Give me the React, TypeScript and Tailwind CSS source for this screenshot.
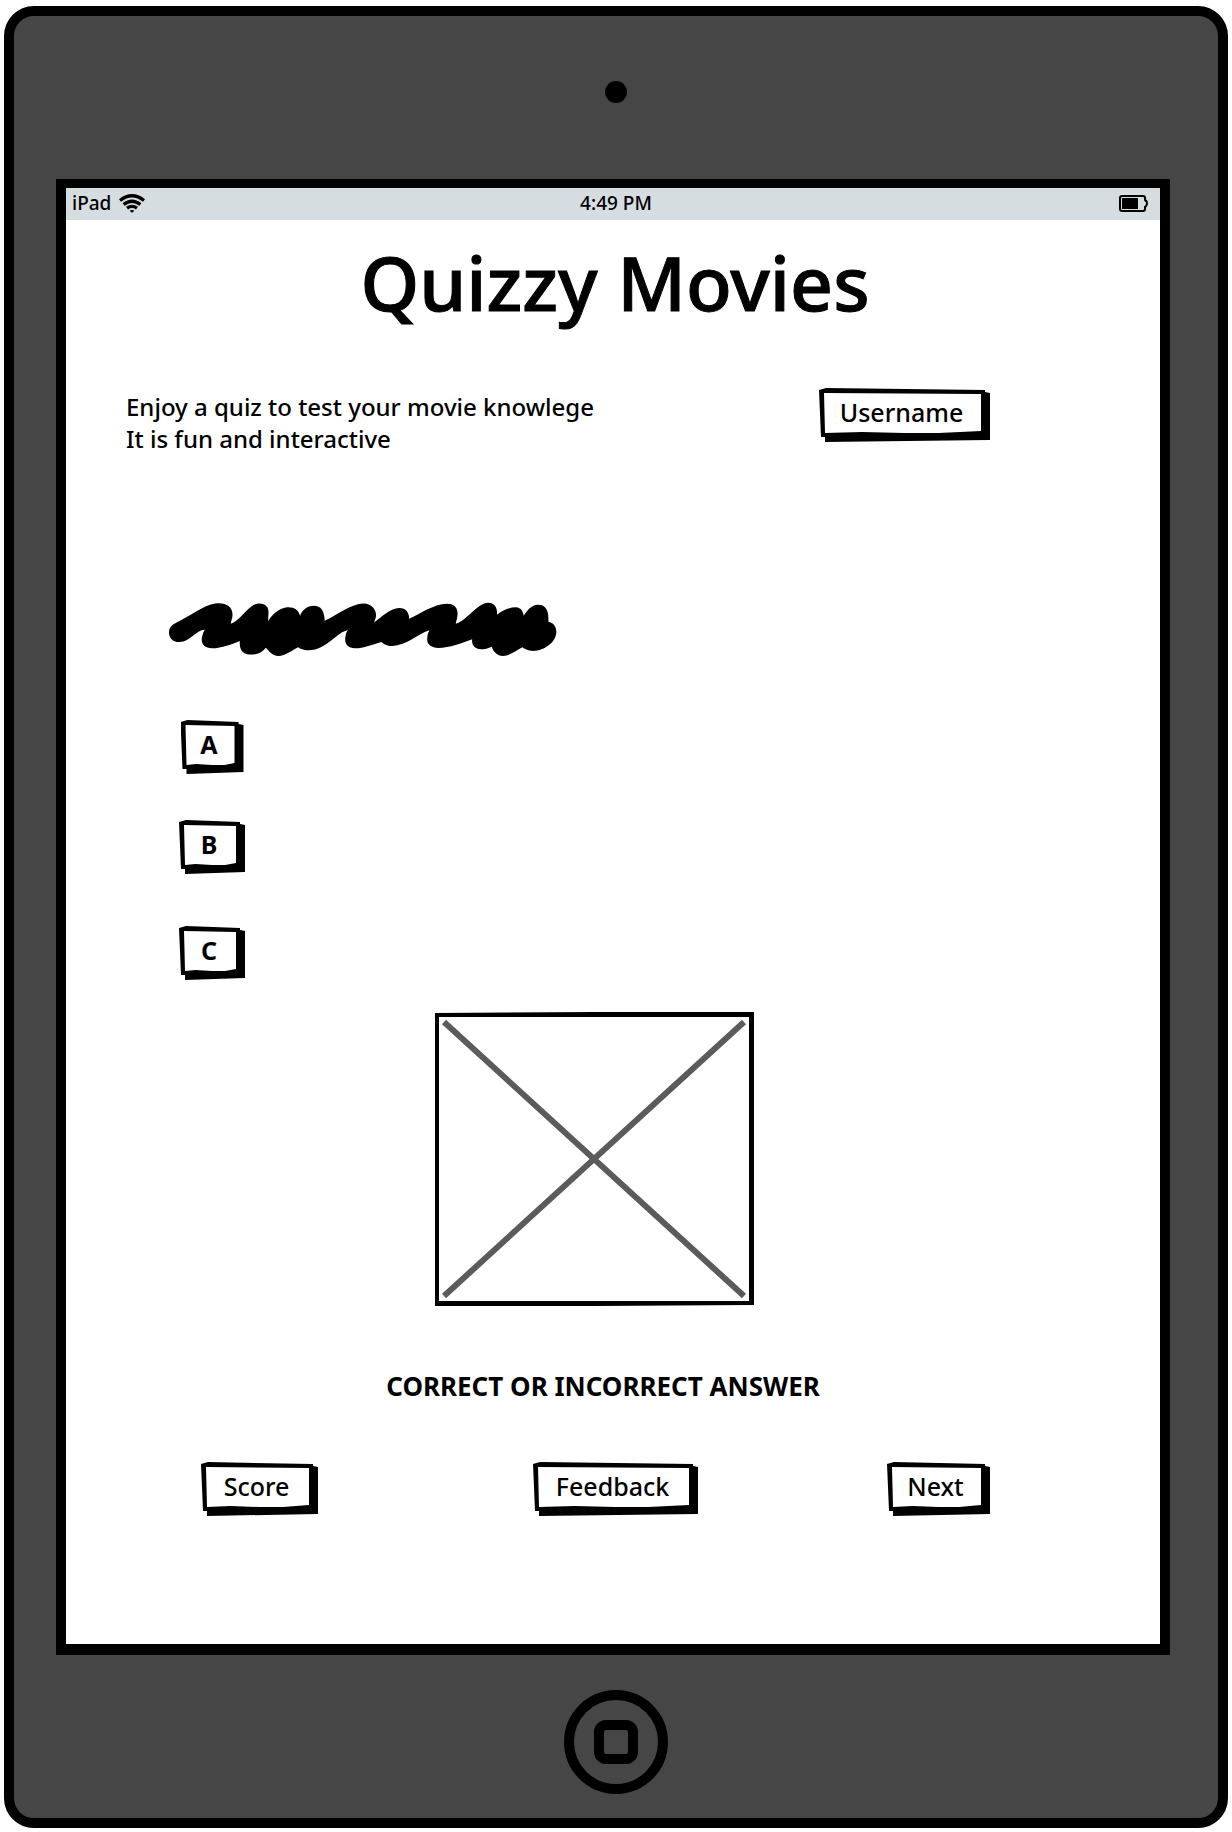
import React from "react";

type SketchButtonProps = {
  children: React.ReactNode;
  className?: string;
  labelClassName?: string;
};

function SketchButton({ children, className = "", labelClassName = "font-medium" }: SketchButtonProps) {
  return (
    <button
      type="button"
      className={`block h-[54px] shrink-0 cursor-pointer bg-black [clip-path:polygon(0_2px,7px_0,calc(100%_-_5px)_2px,calc(100%_-_5px)_4px,100%_5px,100%_calc(100%_-_2px),6px_100%,6px_calc(100%_-_5px),2px_calc(100%_-_5px))] ${className}`}
    >
      <span
        className={`flex h-full w-full items-center justify-center bg-white pr-1.5 pb-1.5 text-[25px] leading-8 text-black [clip-path:polygon(5px_5px,calc(100%_-_9px)_6px,calc(100%_-_9px)_calc(100%_-_11px),70%_calc(100%_-_9px),50%_calc(100%_-_9px),25%_calc(100%_-_10px),6px_calc(100%_-_9px))] ${labelClassName}`}
      >
        {children}
      </span>
    </button>
  );
}

function WifiIcon() {
  return (
    <svg viewBox="0 0 78 56" className="h-[19px] w-[26px]" fill="none" stroke="black" strokeWidth="10" aria-hidden="true">
      <path d="M3 19Q39 -9 75 19" />
      <path d="M14 31Q39 11 64 31" />
      <path d="M24 42Q39 31 54 42" />
      <path d="M32 50Q39 45 46 50L39 56Z" fill="black" stroke="none" />
    </svg>
  );
}

function BatteryIcon() {
  return (
    <svg viewBox="0 0 29 17" className="h-[17px] w-[29px]" aria-hidden="true">
      <path
        d="M3 1H24Q26 1 26 3V5Q28 6 28 8Q28 11 26 12V14Q26 16 24 16H3Q1 16 1 14V3Q1 1 3 1Z"
        fill="none"
        stroke="black"
        strokeWidth="2"
      />
      <rect x="3" y="3" width="16" height="11" fill="black" />
    </svg>
  );
}

function Scribble() {
  return (
    <svg viewBox="26 36 1166 162" className="h-[54px] w-[388px]" role="img" aria-label="Question text">
      <path d="M58 156C38 157 26 144 26 128C26 112 36 104 50 97C85 80 130 45 165 40C195 36 217 48 217 74C217 85 212 92 212 101C235 95 255 60 280 45C300 35 325 42 325 65L324 94C335 75 355 55 380 52C402 50 415 60 420 78C424 62 440 47 462 47C482 47 493 62 494 92C530 75 575 40 610 40C640 40 650 65 648 78C647 88 643 92 643 97C660 85 690 55 718 54C738 54 748 68 748 86C780 72 820 42 862 41C888 41 895 60 893 75C892 88 888 95 888 101C920 92 955 38 985 38C1005 38 1013 52 1012 74C1030 60 1050 52 1068 52C1085 53 1090 65 1092 77C1102 62 1115 44 1135 44C1158 44 1168 60 1166 95C1180 98 1190 108 1190 126C1190 155 1155 183 1120 183C1105 183 1098 178 1088 172C1072 180 1050 198 1030 198C1012 197 1000 184 996 170C985 175 975 178 963 178C945 177 935 166 937 148C905 160 870 174 835 174C810 173 800 160 802 145C803 132 806 125 809 121C775 130 740 168 697 168C680 168 672 163 664 156C640 163 610 175 585 175C562 174 553 160 556 142C557 130 560 125 564 121C530 125 500 181 446 181C430 181 422 177 414 172C395 182 375 198 355 198C335 198 325 180 317 173C305 188 290 194 272 194C250 194 236 182 239 153C215 162 185 175 155 175C130 175 120 158 126 138C128 130 130 124 134 119C108 118 88 156 58 156Z" />
    </svg>
  );
}

function ImagePlaceholder() {
  return (
    <svg viewBox="0 0 320 294" className="h-[294px] w-[320px]" role="img" aria-label="Movie picture">
      <path
        fillRule="evenodd"
        d="M1 1L160 0H320V293L160 294H1ZM5 5V289H315V5Z"
        fill="black"
      />
      <path d="M10 10L310 284M310 10L10 284" fill="none" stroke="#5b5b5b" strokeWidth="6" />
    </svg>
  );
}

export default function App() {
  return (
    <div className="bg-white px-1 pt-1.5 pb-1 font-['Noto_Sans','Open_Sans',sans-serif] text-black">
      <div className="rounded-[30px] border-[10px] border-black bg-[#464646]">
        <div className="flex justify-center pt-[65px] pb-[76px]">
          <div className="size-[22px] rounded-full bg-black" />
        </div>

        <div className="mr-12 ml-[42px] border-x-[10px] border-t-[9px] border-b-[11px] border-black bg-white">
          <header className="grid h-8 grid-cols-3 items-center bg-[#d6dde0] pr-3 pb-0.5 pl-1.5 text-[19px] leading-6 font-medium">
            <div className="flex items-center gap-2">
              <span>iPad</span>
              <WifiIcon />
            </div>
            <time className="pl-3 text-center">4:49 PM</time>
            <div className="flex justify-end">
              <BatteryIcon />
            </div>
          </header>

          <main className="pt-3.5 pb-32">
            <h1 className="pl-1 text-center text-[75px] leading-[96px] font-medium [-webkit-text-stroke:1px_black]">
              Quizzy Movies
            </h1>

            <section className="mt-[58px] flex items-start justify-between pr-[170px] pl-[60px]">
              <p className="pt-[3px] text-[24px] leading-8 font-medium">
                Enjoy a quiz to test your movie knowlege
                <br />
                It is fun and interactive
              </p>
              <SketchButton className="w-[171px]">Username</SketchButton>
            </section>

            <section className="mt-[147px] pl-[103px]">
              <Scribble />
              <div className="mt-16 ml-2.5 flex w-[66px] flex-col items-center">
                <SketchButton className="w-[63px]" labelClassName="font-bold">A</SketchButton>
                <SketchButton className="mt-[46px] w-[66px]" labelClassName="font-bold">B</SketchButton>
                <SketchButton className="mt-[52px] w-[66px]" labelClassName="font-bold">C</SketchButton>
              </div>
            </section>

            <div className="mt-8 flex justify-center pr-[38px]">
              <ImagePlaceholder />
            </div>

            <p className="mt-16 pr-5 text-center text-[26px] leading-8 font-bold">
              CORRECT OR INCORRECT ANSWER
            </p>

            <div className="mt-[60px] flex justify-between pr-[170px] pl-[135px]">
              <SketchButton className="w-[117px]">Score</SketchButton>
              <SketchButton className="ml-[26px] w-[165px]">Feedback</SketchButton>
              <SketchButton className="w-[103px]">Next</SketchButton>
            </div>
          </main>
        </div>

        <div className="flex justify-center pt-[35px] pb-6">
          <button
            type="button"
            aria-label="Home"
            className="flex size-[104px] cursor-pointer items-center justify-center rounded-full border-[10px] border-black"
          >
            <span className="size-11 rounded-xl border-[10px] border-black" />
          </button>
        </div>
      </div>
    </div>
  );
}
